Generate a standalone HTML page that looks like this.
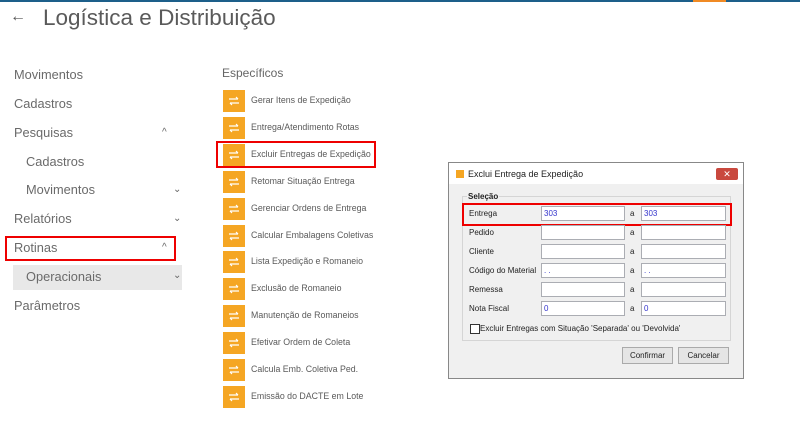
<!DOCTYPE html>
<html><head><meta charset="utf-8"><style>
body{margin:0;width:800px;height:425px;background:#fff;position:relative;overflow:hidden;font-family:"Liberation Sans",sans-serif;color:#555}
.a{position:absolute}
.m{position:absolute;left:14px;font-size:12.8px;color:#6a6a6a}
.chev{position:absolute;font-size:10px;color:#666}
.it{position:absolute;left:223px;height:22px}
.it i{position:absolute;left:0;top:0;width:22px;height:22px;background:#f5a623}
.it i svg{position:absolute;left:5px;top:6px}
.it span{position:absolute;left:28px;top:5px;font-size:8.8px;color:#5a5a5a;white-space:nowrap}
.dl{position:absolute;font-size:8px;color:#222}
.in{position:absolute;height:15px;background:#fff;border:1px solid #abadb3;box-sizing:border-box;font-size:8px;color:#33c;padding:2px 2px}
</style></head><body>
<div class="a" style="left:0;top:0;width:800px;height:2px;background:#1d5f8a"></div>
<div class="a" style="left:693px;top:0;width:33px;height:2px;background:#f08a24"></div>
<div class="a" style="left:10px;top:8px;font-size:16px;color:#555">←</div>
<div class="a" style="left:43px;top:5px;font-size:22.5px;color:#5a5a5a">Logística e Distribuição</div>

<div class="m" style="top:67px">Movimentos</div>
<div class="m" style="top:96px">Cadastros</div>
<div class="m" style="top:125px">Pesquisas</div><div class="chev" style="left:162px;top:127px">^</div>
<div class="m" style="left:26px;top:154px">Cadastros</div>
<div class="m" style="left:26px;top:182px">Movimentos</div><div class="chev" style="left:173px;top:184px">⌄</div>
<div class="m" style="top:211px">Relatórios</div><div class="chev" style="left:173px;top:213px">⌄</div>
<div class="a" style="left:5px;top:236px;width:171px;height:25px;border:2px solid #e00;box-sizing:border-box"></div>
<div class="m" style="top:240px">Rotinas</div><div class="chev" style="left:162px;top:242px">^</div>
<div class="a" style="left:13px;top:265px;width:169px;height:25px;background:#e8e8e8"></div>
<div class="m" style="left:26px;top:269px">Operacionais</div><div class="chev" style="left:173px;top:270px">⌄</div>
<div class="m" style="top:298px">Parâmetros</div>

<div class="a" style="left:222px;top:66px;font-size:12px;color:#666">Específicos</div>
<div class="a" style="left:216px;top:141px;width:160px;height:27px;border:2px solid #e00;box-sizing:border-box"></div>
<div id="list"></div>
<script>
var t=["Gerar Itens de Expedição","Entrega/Atendimento Rotas","Excluir Entregas de Expedição","Retomar Situação Entrega","Gerenciar Ordens de Entrega","Calcular Embalagens Coletivas","Lista Expedição e Romaneio","Exclusão de Romaneio","Manutenção de Romaneios","Efetivar Ordem de Coleta","Calcula Emb. Coletiva Ped.","Emissão do DACTE em Lote"];
var h="";t.forEach(function(s,i){h+='<div class="it" style="top:'+(90+i*26.9)+'px"><i><svg width="12" height="10" viewBox="0 0 12 10"><path d="M1 3H10M8 1L10 3M11 7H2M4 9L2 7" stroke="#fff" stroke-width="1.2" fill="none"/></svg></i><span>'+s+'</span></div>'});
document.getElementById("list").innerHTML=h;
</script>

<div class="a" style="left:448px;top:162px;width:296px;height:217px;background:#f0f0f0;border:1px solid #888;box-sizing:border-box"></div>
<div class="a" style="left:449px;top:163px;width:294px;height:21px;background:#fff"></div>
<div class="a" style="left:456px;top:170px;width:8px;height:8px;background:#f5a623"></div>
<div class="dl" style="left:468px;top:169px;font-size:9px">Exclui Entrega de Expedição</div>
<div class="a" style="left:716px;top:168px;width:22px;height:12px;background:#c9483e;border-radius:2px;color:#fff;font-size:9px;text-align:center;line-height:12px">✕</div>
<div class="a" style="left:462px;top:196px;width:269px;height:145px;border:1px solid #d5d5d5;box-sizing:border-box"></div>
<div class="dl" style="left:467px;top:192px;font-weight:bold;background:#f0f0f0;padding:0 1px">Seleção</div>
<div class="a" style="left:462px;top:203px;width:270px;height:23px;border:2px solid #e00;box-sizing:border-box"></div>
<div id="rows"></div>
<script>
var r=[["Entrega",206,"303","303"],["Pedido",225,"",""],["Cliente",244,"",""],["Código do Material",263,"  .  .","  .  ."],["Remessa",282,"",""],["Nota Fiscal",301,"0","0"]];
var h2="";r.forEach(function(x){h2+='<div class="dl" style="left:469px;top:'+(x[1]+3)+'px">'+x[0]+'</div><div class="in" style="left:541px;top:'+x[1]+'px;width:84px">'+x[2]+'</div><div class="dl" style="left:630px;top:'+(x[1]+3)+'px">a</div><div class="in" style="left:641px;top:'+x[1]+'px;width:85px">'+x[3]+'</div>'});
document.getElementById("rows").innerHTML=h2;
</script>
<div class="a" style="left:470px;top:324px;width:8px;height:8px;border:1px solid #333;background:#fff"></div>
<div class="dl" style="left:480px;top:324px">Excluir Entregas com Situação 'Separada' ou 'Devolvida'</div>
<div class="a" style="left:622px;top:347px;width:51px;height:17px;border:1px solid #aaa;background:#e5e5e5;box-sizing:border-box;font-size:8px;color:#222;text-align:center;line-height:15px">Confirmar</div>
<div class="a" style="left:678px;top:347px;width:51px;height:17px;border:1px solid #aaa;background:#e5e5e5;box-sizing:border-box;font-size:8px;color:#222;text-align:center;line-height:15px">Cancelar</div>
</body></html>
